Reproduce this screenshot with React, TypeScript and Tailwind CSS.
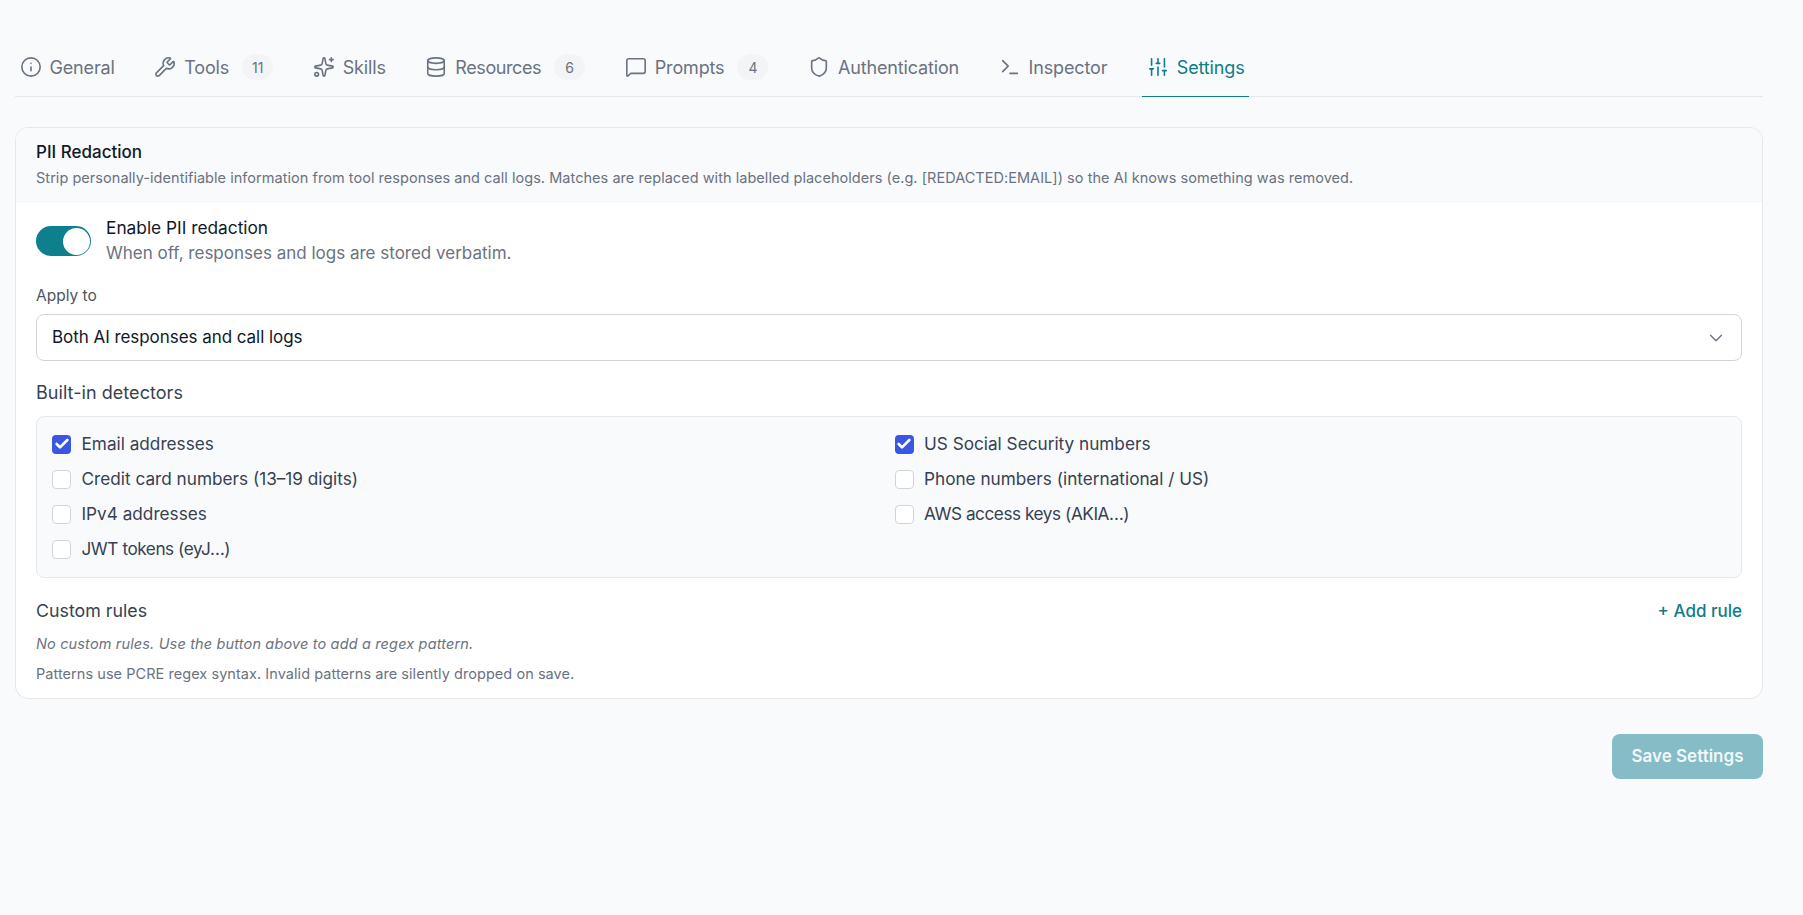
import { Info, Wrench, Sparkles, Database, MessageSquare, Shield, Terminal, SlidersVertical, ChevronDown, Check } from "lucide-react"

const TABS = [
  { label: "General", icon: Info },
  { label: "Tools", icon: Wrench, count: 11 },
  { label: "Skills", icon: Sparkles },
  { label: "Resources", icon: Database, count: 6, tight: true },
  { label: "Prompts", icon: MessageSquare, count: 4 },
  { label: "Authentication", icon: Shield },
  { label: "Inspector", icon: Terminal },
  { label: "Settings", icon: SlidersVertical, active: true },
]

const DETECTORS = [
  { label: "Email addresses", checked: true },
  { label: "US Social Security numbers", checked: true },
  { label: "Credit card numbers (13–19 digits)" },
  { label: "Phone numbers (international / US)" },
  { label: "IPv4 addresses" },
  { label: "AWS access keys (AKIA…)", tight: true },
  { label: "JWT tokens (eyJ…)", tight: true },
]

export default function App() {
  return (
    <div className="min-h-[915px] bg-[#f8fafc] pl-[15px] pr-[40px] pt-[38px] font-['Inter',sans-serif]">
      <nav className="flex h-[59px] gap-[30.5px] border-b border-[#e5e7eb]">
        {TABS.map((tab) => (
          <div
            key={tab.label}
            className={
              tab.active
                ? "-mb-px flex items-center gap-[8px] border-b-[1.5px] border-[#0f7c88] px-[4.5px] text-[#0f7c88]"
                : "flex items-center gap-[8px] px-[4.5px] text-[#6b7280]"
            }
          >
            <tab.icon className="size-[22px]" strokeWidth={1.75} />
            <span className={tab.tight ? "text-[18px] tracking-[-0.4px]" : "text-[18px] tracking-[-0.15px]"}>{tab.label}</span>
            {tab.count !== undefined && (
              <span className="ml-[5px] flex h-[26px] min-w-[31px] items-center justify-center rounded-full bg-[#f3f4f6] text-[14px]">
                {tab.count}
              </span>
            )}
          </div>
        ))}
      </nav>

      <section className="mt-[30px] overflow-hidden rounded-[13px] border border-[#e5e7eb] bg-white">
        <header className="h-[74px] border-b border-[#f3f4f6] bg-[#f8fafc] px-[20px] pt-[12px]">
          <h2 className="text-[17px] font-medium leading-[24px] text-[#111827]">PII Redaction</h2>
          <p className="mt-[3px] text-[14.5px] leading-[22px] tracking-[0.04px] text-[#6b7280]">
            Strip personally-identifiable information from tool responses and call logs. Matches are replaced with labelled
            placeholders (e.g. [REDACTED:EMAIL]) so the AI knows something was removed.
          </p>
        </header>

        <div className="px-[20px] pt-[13px] pb-[13px]">
          <div className="flex gap-[15px]">
            <div className="mt-[11px] flex h-[30px] w-[55px] items-center justify-end rounded-full bg-[#0e7f8c] pr-[1.5px]">
              <div className="size-[27px] rounded-full bg-white" />
            </div>
            <div>
              <div className="text-[17.3px] leading-[26px] text-[#111827]">Enable PII redaction</div>
              <div className="text-[17px] leading-[24px] text-[#6b7280]">When off, responses and logs are stored verbatim.</div>
            </div>
          </div>

          <div className="mt-[20px] text-[15.5px] leading-[22px] text-[#4b5563]">Apply to</div>
          <div className="mt-[7px] flex h-[47px] items-center justify-between rounded-[8px] border border-[#d1d5db] bg-white pl-[15px] pr-[14px]">
            <span className="text-[17px] tracking-[-0.05px] text-[#111827]">Both AI responses and call logs</span>
            <ChevronDown className="size-[22px] text-[#6b7280]" strokeWidth={1.5} />
          </div>

          <div className="mt-[20px] text-[18px] leading-[24px] tracking-[0.05px] text-[#374151]">Built-in detectors</div>
          <div className="mt-[11px] grid h-[162px] grid-cols-2 content-start gap-x-[11px] gap-y-[11px] rounded-[8px] border border-[#e5e7eb] bg-[#f8fafc] px-[15px] pt-[15px]">
            {DETECTORS.map((d) => (
              <label key={d.label} className="flex h-[24px] items-center gap-[10.5px]">
                {d.checked ? (
                  <span className="flex size-[19px] items-center justify-center rounded-[4px] bg-[#3b56e0] text-white">
                    <Check className="size-[16px]" strokeWidth={4} />
                  </span>
                ) : (
                  <span className="size-[19px] rounded-[4px] border border-[#d1d5db] bg-white" />
                )}
                <span className={d.tight ? "text-[17.2px] tracking-[-0.45px] text-[#374151]" : "text-[17.2px] text-[#374151]"}>
                  {d.label}
                </span>
              </label>
            ))}
          </div>

          <div className="mt-[21px] flex items-center justify-between">
            <span className="text-[17.8px] leading-[24px] text-[#374151]">Custom rules</span>
            <span className="text-[17px] font-medium leading-[24px] text-[#0f7c88]">+ Add rule</span>
          </div>
          <p className="mt-[10px] text-[14.5px] italic leading-[22px] tracking-[0.15px] text-[#6b7280]">
            No custom rules. Use the button above to add a regex pattern.
          </p>
          <p className="mt-[8px] text-[14.5px] leading-[22px] tracking-[0.05px] text-[#6b7280]">
            Patterns use PCRE regex syntax. Invalid patterns are silently dropped on save.
          </p>
        </div>
      </section>

      <div className="mt-[35px] flex justify-end">
        <button className="h-[45px] w-[151px] rounded-[8px] bg-[#85bcc5] text-[17px] font-semibold text-[#f0f8f9]">
          Save Settings
        </button>
      </div>
    </div>
  )
}
